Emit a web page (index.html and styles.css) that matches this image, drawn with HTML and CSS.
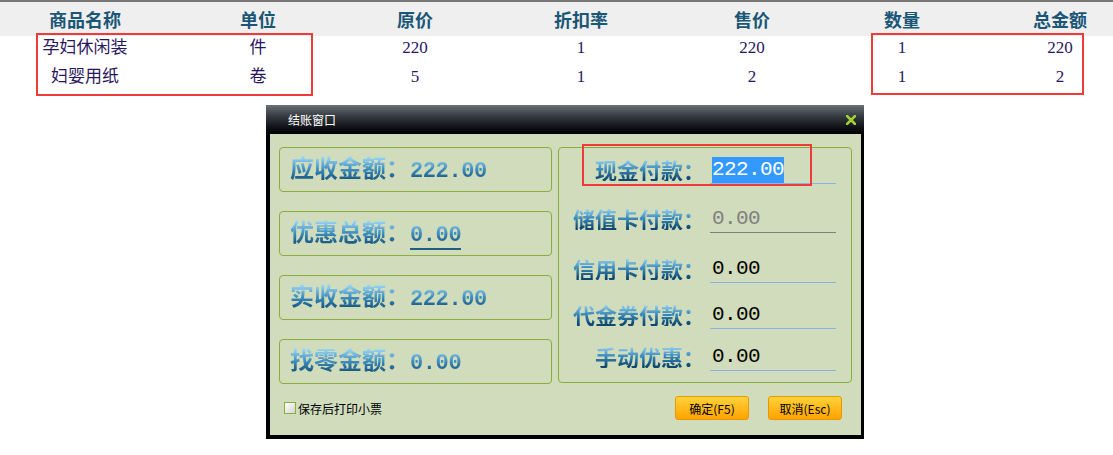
FILE: index.html
```html
<!DOCTYPE html>
<html>
<head>
  <title>结账窗口</title>
  <link rel="stylesheet" href="styles.css">
</head>
<body>
  <div class="sheet">
    <div class="grid head">
      <div>商品名称</div><div>单位</div><div>原价</div><div>折扣率</div><div>售价</div><div>数量</div><div class="last">总金额</div>
    </div>
    <div class="grid row">
      <div>孕妇休闲装</div><div>件</div><div>220</div><div>1</div><div>220</div><div>1</div><div class="last">220</div>
    </div>
    <div class="grid row">
      <div>妇婴用纸</div><div>卷</div><div>5</div><div>1</div><div>2</div><div>1</div><div class="last">2</div>
    </div>
    <div class="mark mark-left"></div>
    <div class="mark mark-right"></div>
  </div>

  <div class="dlg">
    <div class="dlg-title">
      <span>结账窗口</span>
      <svg class="dlg-close" width="10" height="10" viewBox="0 0 10 10">
        <path d="M1 1 L9 9 M9 1 L1 9" stroke="#a6cf37" stroke-width="2.6" stroke-linecap="square"/>
      </svg>
    </div>
    <div class="dlg-body">
      <div class="dlg-main">
        <div class="sums">
          <div class="sum"><span class="grad">应收金额：<span class="num">222.00</span></span></div>
          <div class="sum"><span class="grad">优惠总额：<span class="num under">0.00</span></span></div>
          <div class="sum"><span class="grad">实收金额：<span class="num">222.00</span></span></div>
          <div class="sum"><span class="grad">找零金额：<span class="num">0.00</span></span></div>
        </div>
        <div class="pays">
          <div class="pay"><span class="grad lbl">现金付款：</span><div class="field"><span class="sel">222.00</span></div></div>
          <div class="pay"><span class="grad lbl">储值卡付款：</span><div class="field off">0.00</div></div>
          <div class="pay"><span class="grad lbl">信用卡付款：</span><div class="field">0.00</div></div>
          <div class="pay"><span class="grad lbl">代金券付款：</span><div class="field">0.00</div></div>
          <div class="pay"><span class="grad lbl">手动优惠：</span><div class="field">0.00</div></div>
          <div class="mark mark-cash"></div>
        </div>
      </div>
      <div class="dlg-foot">
        <label class="check"><span class="box"></span>保存后打印小票</label>
        <div class="btns">
          <button class="btn">确定(F5)</button>
          <button class="btn">取消(Esc)</button>
        </div>
      </div>
    </div>
  </div>
</body>
</html>
```

FILE: styles.css
```css
body {
  margin: 0;
  background: #fff;
  font-family: "Liberation Serif", "Noto Sans CJK SC", serif;
}
.sheet {
  position: relative;
  border-top: 2px solid #777;
}
.grid {
  display: grid;
  grid-template-columns: 170px 176px 138px 194px 148px 152px 135px;
  text-align: center;
}
.grid .last {
  padding-left: 29px;
}
.head {
  height: 34px;
  line-height: 34px;
  background-color: #efefef;
  font-family: "Noto Sans CJK SC", sans-serif;
  font-weight: bold;
  font-size: 18px;
  color: #1a5676;
}
.row {
  height: 29px;
  line-height: 23px;
  font-size: 17px;
  color: #2a1660;
}
.mark {
  position: absolute;
  border: 2px solid #f03a3a;
}
.mark-left {
  left: 36px;
  top: 31px;
  width: 273px;
  height: 59px;
}
.mark-right {
  left: 871px;
  top: 31px;
  width: 209px;
  height: 58px;
}

/* dialog */
.dlg {
  width: 598px;
  margin: 11px 0 0 266px;
  padding-bottom: 4px;
  background: #000;
  font-family: "Noto Sans CJK SC", sans-serif;
}
.dlg-title {
  height: 29px;
  display: flex;
  align-items: center;
  justify-content: space-between;
  padding: 0 8px 0 22px;
  background: linear-gradient(#6c7177 0%, #3a3f45 35%, #0c0f12 80%, #000 100%);
  color: #fff;
  font-size: 12px;
}
.dlg-body {
  margin: 0 3px 0 4px;
  height: 301px;
  background-color: #d0dcbc;
  padding: 13px 9px 0 9px;
  box-sizing: border-box;
}
.dlg-main {
  display: flex;
  gap: 6px;
}
.sums {
  width: 273px;
  display: flex;
  flex-direction: column;
  gap: 19px;
}
.sum {
  height: 45px;
  box-sizing: border-box;
  border: 1px solid #8aae3c;
  border-radius: 4px;
  display: flex;
  align-items: center;
  padding-left: 10px;
}
.grad {
  display: inline-block;
  background: linear-gradient(#9ad6f6 10%, #3c8cbc 50%, #0c4870 92%);
  -webkit-background-clip: text;
  background-clip: text;
  color: transparent;
  font-size: 24px;
  font-weight: bold;
  line-height: 26px;
}
.num {
  font-family: "Liberation Mono", monospace;
  font-size: 22px;
  letter-spacing: -0.4px;
}
.under {
  border-bottom: 2px solid #1f5f82;
}
.pays {
  position: relative;
  width: 294px;
  height: 236px;
  box-sizing: border-box;
  border: 1px solid #8aae3c;
  border-radius: 4px;
  display: grid;
  grid-template-rows: 36px 49px 50px 46px 42px;
  align-items: end;
}
.pay {
  display: flex;
  align-items: flex-end;
}
.lbl {
  width: 146px;
  text-align: right;
  font-size: 22px;
  line-height: 24px;
  margin-bottom: 3px;
}
.field {
  margin-left: 5px;
  width: 126px;
  height: 27px;
  box-sizing: border-box;
  border-bottom: 1px solid #8ab4e6;
  padding-left: 2px;
  font-family: "Liberation Mono", monospace;
  font-size: 21px;
  letter-spacing: -0.6px;
  line-height: 26px;
  color: #000;
}
.field.off {
  color: #808080;
  border-bottom-color: #808080;
}
.sel {
  background-color: #3399ff;
  color: #fff;
  display: inline-block;
  height: 26px;
}
.mark-cash {
  left: 23px;
  top: -4px;
  width: 226px;
  height: 38px;
}
.dlg-foot {
  margin-top: 12px;
  display: flex;
  justify-content: space-between;
  align-items: center;
  padding: 0 10px 0 5px;
}
.check {
  display: flex;
  align-items: center;
  gap: 2px;
  font-size: 12px;
  color: #000;
}
.box {
  width: 10px;
  height: 10px;
  border: 1px solid #8aae3c;
  background: linear-gradient(135deg, #fff, #d4d4d4);
}
.btns {
  display: flex;
  gap: 19px;
}
.btn {
  width: 74px;
  height: 24px;
  padding: 0;
  border: 1px solid #e69a00;
  border-radius: 3px;
  background: linear-gradient(#ffd23a, #ffa200);
  font-family: "Noto Sans CJK SC", sans-serif;
  font-size: 12px;
  color: #000;
}
```
